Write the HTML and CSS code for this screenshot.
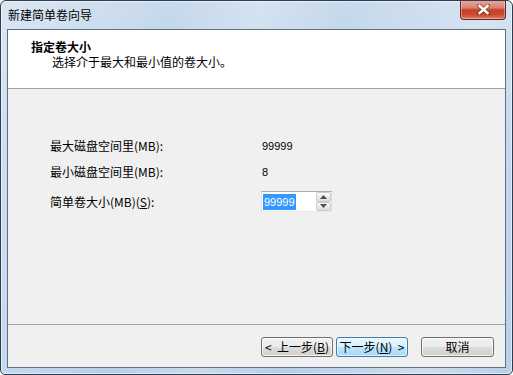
FILE: index.html
```html
<!DOCTYPE html>
<html lang="zh-CN">
<head>
<meta charset="utf-8">
<title>新建简单卷向导</title>
<link rel="stylesheet" href="styles.css">
</head>
<body>
<div class="window">
  <div class="titlebar">
    <span class="title">新建简单卷向导</span>
    <div class="close">
      <svg width="13" height="11" viewBox="0 0 13 11">
        <path d="M2 1.5 L11 9.5 M11 1.5 L2 9.5" stroke="#5a1e16" stroke-width="4" stroke-linecap="square" opacity="0.55"/>
        <path d="M2.5 2 L10.5 9 M10.5 2 L2.5 9" stroke="#ffffff" stroke-width="2.4" stroke-linecap="square"/>
      </svg>
    </div>
  </div>
  <div class="client">
    <div class="header">
      <div class="h-title">指定卷大小</div>
      <div class="h-sub">选择介于最大和最小值的卷大小。</div>
    </div>
    <div class="body">
      <div class="row r1">
        <span class="label">最大磁盘空间里(MB):</span>
        <span class="value">99999</span>
      </div>
      <div class="row r2">
        <span class="label">最小磁盘空间里(MB):</span>
        <span class="value">8</span>
      </div>
      <div class="row r3">
        <span class="label">简单卷大小(MB)(<u>S</u>):</span>
        <div class="spin">
          <span class="sel">99999</span>
          <div class="spin-btns">
            <div class="sb up"><svg width="7" height="4" viewBox="0 0 7 4"><path d="M0 4 L3.5 0 L7 4 Z" fill="#4d4d4d"/></svg></div>
            <div class="sb down"><svg width="7" height="4" viewBox="0 0 7 4"><path d="M0 0 L3.5 4 L7 0 Z" fill="#4d4d4d"/></svg></div>
          </div>
        </div>
      </div>
    </div>
    <div class="footer">
      <button class="btn back">&lt;&nbsp; 上一步(<u>B</u>)</button>
      <button class="btn next">下一步(<u>N</u>)&nbsp; &gt;</button>
      <button class="btn cancel">取消</button>
    </div>
  </div>
</div>
</body>
</html>
```
FILE: styles.css
```css
html, body {
  margin: 0;
  padding: 0;
  background: #ffffff;
}
body {
  font-family: "Noto Sans CJK SC", "Noto Sans", sans-serif;
  font-size: 12px;
  color: #000;
}
.window {
  width: 513px;
  height: 375px;
  box-sizing: border-box;
  border: 1px solid #2f3d4e;
  border-radius: 6px 6px 5px 5px;
  padding: 0 6px 6px 6px;
  display: flex;
  flex-direction: column;
  background:
    linear-gradient(100deg, rgba(255,255,255,0.35) 0%, rgba(255,255,255,0) 30%, rgba(255,255,255,0.25) 45%, rgba(255,255,255,0) 60%, rgba(255,255,255,0.3) 85%, rgba(255,255,255,0) 100%),
    linear-gradient(180deg, #c7d9ec 0%, #b9d1ea 40%, #b6cfe9 100%);
  box-shadow: inset 0 0 0 1px rgba(255,255,255,0.55);
  overflow: hidden;
}
.titlebar {
  height: 28px;
  display: flex;
  justify-content: space-between;
  align-items: flex-start;
  flex: none;
}
.title {
  margin-top: 7px;
  padding-left: 1px;
  line-height: 14px;
  font-size: 12px;
  color: #000;
}
.close {
  width: 46px;
  height: 20px;
  margin-top: -1px;
  box-sizing: border-box;
  border: 1px solid #5b2a24;
  border-top: none;
  border-radius: 0 0 4px 4px;
  background: linear-gradient(180deg, #e9a99c 0%, #d98574 40%, #c24328 52%, #c8472f 75%, #e07a5f 100%);
  box-shadow: inset 0 0 0 1px rgba(255,255,255,0.35);
  display: flex;
  align-items: center;
  justify-content: center;
}
.client {
  flex: 1;
  display: flex;
  flex-direction: column;
  border: 1px solid #5b6f88;
  background: #f0f0f0;
}
.header {
  box-sizing: border-box;
  background: #ffffff;
  border-bottom: 1px solid #a0a0a0;
  padding: 10px 0 0 23px;
  flex: none;
  height: 59px;
}
.h-title {
  font-weight: bold;
  line-height: 14px;
}
.h-sub {
  line-height: 14px;
  margin-top: 1px;
  padding-left: 21px;
}
.body {
  flex: 1;
  padding: 44px 0 0 42px;
  display: flex;
  flex-direction: column;
}
.row {
  display: flex;
  align-items: center;
  height: 26px;
}
.row.r3 {
  margin-top: 6px;
  height: 21px;
}
.label {
  width: 211px;
  line-height: 14px;
}
.value {
  font-family: "Liberation Sans", sans-serif;
  font-size: 11px;
  padding-left: 1px;
}
.spin {
  width: 71px;
  height: 21px;
  box-sizing: border-box;
  border: 1px solid #abadb3;
  border-left-color: #e2e3ea;
  border-right-color: #dbdfe6;
  border-bottom-color: #e3e9ef;
  background: #ffffff;
  display: flex;
  align-items: center;
  justify-content: space-between;
  padding-left: 1px;
}
.sel {
  background: #3399ff;
  color: #ffffff;
  font-family: "Liberation Sans", sans-serif;
  font-size: 11px;
  line-height: 16px;
  padding: 0 1px;
}
.spin-btns {
  width: 15px;
  height: 19px;
  display: flex;
  flex-direction: column;
}
.sb {
  flex: 1;
  box-sizing: border-box;
  border: 1px solid #c8ccd2;
  border-radius: 2px;
  background: linear-gradient(180deg, #fbfbfb 0%, #ececec 50%, #dcdcdc 100%);
  display: flex;
  align-items: center;
  justify-content: center;
}
.footer {
  height: 43px;
  box-sizing: border-box;
  border-top: 1px solid #a0a0a0;
  padding: 12px 11px 0 0;
  display: flex;
  justify-content: flex-end;
  align-items: flex-start;
  flex: none;
}
.btn {
  width: 72px;
  height: 20px;
  box-sizing: border-box;
  padding: 0;
  font-family: "Noto Sans CJK SC", "Noto Sans", sans-serif;
  font-size: 12px;
  line-height: 16px;
  color: #000;
  border: 1px solid #707070;
  border-radius: 3px;
  background: linear-gradient(180deg, #f2f2f2 0%, #ebebeb 50%, #dddddd 51%, #cfcfcf 100%);
  box-shadow: inset 0 0 0 1px rgba(255,255,255,0.7);
  white-space: nowrap;
}
.btn u {
  text-decoration: underline;
}
.btn.next {
  margin-left: 3px;
  border-color: #3c7fb1;
  background: linear-gradient(180deg, #eaf6fd 0%, #d9f0fc 50%, #bee6fd 51%, #a7d9f5 100%);
  box-shadow: inset 0 0 0 1px rgba(255,255,255,0.6);
}
.btn.cancel {
  margin-left: 13px;
  width: 73px;
}
```
